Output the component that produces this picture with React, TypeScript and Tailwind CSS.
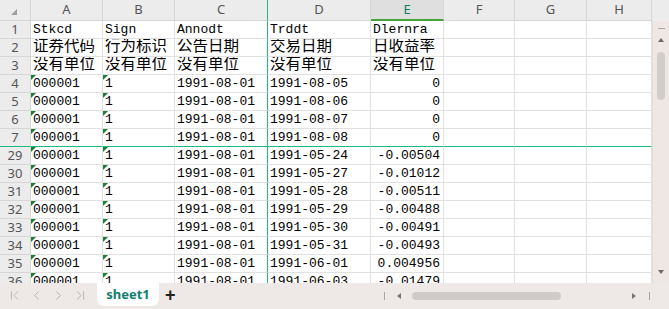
import { FC } from "react";
import { ChevronFirst, ChevronLast, ChevronLeft, ChevronRight } from "lucide-react";

type Row = {
  num: number;
  cells: string[];
  cjk?: boolean;
  flagged?: boolean;
  frozen?: boolean;
};

const columns = [
  { key: "A", w: "w-[72px]" },
  { key: "B", w: "w-[72px]" },
  { key: "C", w: "w-[93px]" },
  { key: "D", w: "w-[103px]" },
  { key: "E", w: "w-[73px]" },
  { key: "F", w: "w-[71px]" },
  { key: "G", w: "w-[72px]" },
  { key: "H", w: "w-[65px]" },
];

const unit = "没有单位";

const rows: Row[] = [
  { num: 1, cells: ["Stkcd", "Sign", "Annodt", "Trddt", "Dlernra"] },
  { num: 2, cells: ["证券代码", "行为标识", "公告日期", "交易日期", "日收益率"], cjk: true },
  { num: 3, cells: [unit, unit, unit, unit, unit], cjk: true },
  { num: 4, cells: ["000001", "1", "1991-08-01", "1991-08-05", "0"], flagged: true },
  { num: 5, cells: ["000001", "1", "1991-08-01", "1991-08-06", "0"], flagged: true },
  { num: 6, cells: ["000001", "1", "1991-08-01", "1991-08-07", "0"], flagged: true },
  { num: 7, cells: ["000001", "1", "1991-08-01", "1991-08-08", "0"], flagged: true, frozen: true },
  { num: 29, cells: ["000001", "1", "1991-08-01", "1991-05-24", "-0.00504"], flagged: true },
  { num: 30, cells: ["000001", "1", "1991-08-01", "1991-05-27", "-0.01012"], flagged: true },
  { num: 31, cells: ["000001", "1", "1991-08-01", "1991-05-28", "-0.00511"], flagged: true },
  { num: 32, cells: ["000001", "1", "1991-08-01", "1991-05-29", "-0.00488"], flagged: true },
  { num: 33, cells: ["000001", "1", "1991-08-01", "1991-05-30", "-0.00491"], flagged: true },
  { num: 34, cells: ["000001", "1", "1991-08-01", "1991-05-31", "-0.00493"], flagged: true },
  { num: 35, cells: ["000001", "1", "1991-08-01", "1991-06-01", "0.004956"], flagged: true },
  { num: 36, cells: ["000001", "1", "1991-08-01", "1991-06-03", "-0.01479"], flagged: true },
];

const ColumnHeader: FC = () => (
  <div className="flex h-[21px] bg-[#ececec] font-['Noto_Sans','Liberation_Sans',sans-serif] text-[13px] text-[#555]">
    {/* corner */}
    <div className="relative w-[31px] border-r border-b border-[#d6d6d6]">
      <div className="absolute left-[11px] top-[9px] w-0 h-0 border-l-[6px] border-l-transparent border-b-[6px] border-b-[#a0a0a0]" />
    </div>
    {columns.map((c) => {
      const selected = c.key === "E";
      const frozen = c.key === "C";
      return (
        <div
          key={c.key}
          className={`${c.w} flex items-center justify-center border-r ${
            selected
              ? "bg-[#dfdfdf] text-[#137a62] border-b-2 border-b-[#45a23c]"
              : "border-b border-b-[#d6d6d6]"
          } ${frozen ? "border-r-[#1db97d]" : "border-r-[#d6d6d6]"}`}
        >
          {c.key}
        </div>
      );
    })}
    <div className="flex-1" />
  </div>
);

const GridRow: FC<{ row: Row }> = ({ row }) => (
  <div className="flex h-[18px]">
    <div
      className={`w-[31px] shrink-0 flex items-center justify-center bg-[#ececec] border-r border-r-[#d6d6d6] border-b font-['Noto_Sans','Liberation_Sans',sans-serif] text-[13px] text-[#555] ${
        row.frozen ? "border-b-[#1db97d]" : "border-b-[#d6d6d6]"
      }`}
    >
      {row.num}
    </div>
    {columns.map((c, i) => {
      const value = row.cells[i] ?? "";
      const isNumber = c.key === "E" && !row.cjk && row.num > 3;
      return (
        <div
          key={c.key}
          className={`${c.w} shrink-0 relative border-r border-b whitespace-nowrap overflow-hidden leading-[17px] text-black font-['Liberation_Mono','Noto_Sans_CJK_SC',monospace] ${
            row.cjk ? "text-[15.5px] pl-[2px]" : "text-[13px]"
          } ${isNumber ? "text-right pr-[3px]" : "pl-[2px]"} ${
            c.key === "C" ? "border-r-[#1db97d]" : "border-r-[#e1e1e1]"
          } ${row.frozen ? "border-b-[#1db97d]" : "border-b-[#e1e1e1]"}`}
        >
          {row.flagged && (c.key === "A" || c.key === "B") && (
            <span className="absolute left-0 top-0 w-0 h-0 border-t-[5px] border-t-[#1e7d32] border-r-[5px] border-r-transparent" />
          )}
          {value}
        </div>
      );
    })}
  </div>
);

const VScrollbar: FC = () => (
  <div className="w-[17px] h-full bg-[#eee7e4] border-l border-[#e4dedb] flex flex-col items-center">
    <div className="mt-[7px] w-[7px] h-[1px] bg-[#a9a4a2]" />
    <div className="mt-[9px] w-0 h-0 border-l-[3px] border-r-[3px] border-b-[4px] border-l-transparent border-r-transparent border-b-[#6e6a69]" />
    <div className="mt-[10px] w-[8px] h-[48px] rounded-full bg-[#d2cdcb]" />
    <div className="flex-1" />
    <div className="mb-[9px] w-0 h-0 border-l-[3px] border-r-[3px] border-t-[4px] border-l-transparent border-r-transparent border-t-[#6e6a69]" />
  </div>
);

const BottomBar: FC = () => (
  <div className="h-[26px] bg-[#eee8e6] flex items-start">
    {/* sheet navigation */}
    <div className="flex items-center h-[25px] pl-[7px] gap-[7px] text-[#b0b0b0]">
      <ChevronFirst size={15} strokeWidth={1.5} />
      <ChevronLeft size={15} strokeWidth={1.5} />
      <ChevronRight size={15} strokeWidth={1.5} />
      <ChevronLast size={15} strokeWidth={1.5} />
    </div>
    {/* tab */}
    <div className="ml-[9px] w-[62px] h-[23px] bg-white rounded-b-[7px] flex items-center justify-center text-[#10806e] font-bold font-['Noto_Sans','Liberation_Sans',sans-serif] text-[13px]">
      sheet1
    </div>
    <div className="ml-[6px] h-[24px] flex items-center text-[18px] font-bold text-[#222] font-['Liberation_Sans',sans-serif]">
      +
    </div>
    {/* horizontal scrollbar */}
    <div className="ml-auto mr-[19px] h-[25px] w-[266px] flex items-center">
      <div className="w-[1px] h-[8px] bg-[#a9a4a2]" />
      <div className="ml-[12px] w-0 h-0 border-t-[3px] border-b-[3px] border-r-[4px] border-t-transparent border-b-transparent border-r-[#7a7574]" />
      <div className="ml-[11px] w-[149px] h-[8px] rounded-full bg-[#d0cbc9]" />
      <div className="flex-1" />
      <div className="w-0 h-0 border-t-[3px] border-b-[3px] border-l-[4px] border-t-transparent border-b-transparent border-l-[#7a7574]" />
      <div className="ml-[13px] w-[1px] h-[8px] bg-[#a9a4a2]" />
    </div>
  </div>
);

const App: FC = () => {
  return (
    <div className="w-[669px] h-[309px] bg-white overflow-hidden flex flex-col">
      <ColumnHeader />
      <div className="flex h-[262px] overflow-hidden">
        <div className="w-[652px] overflow-hidden">
          {rows.map((r) => (
            <GridRow key={r.num} row={r} />
          ))}
        </div>
        <VScrollbar />
      </div>
      <BottomBar />
    </div>
  );
};

export default App;
